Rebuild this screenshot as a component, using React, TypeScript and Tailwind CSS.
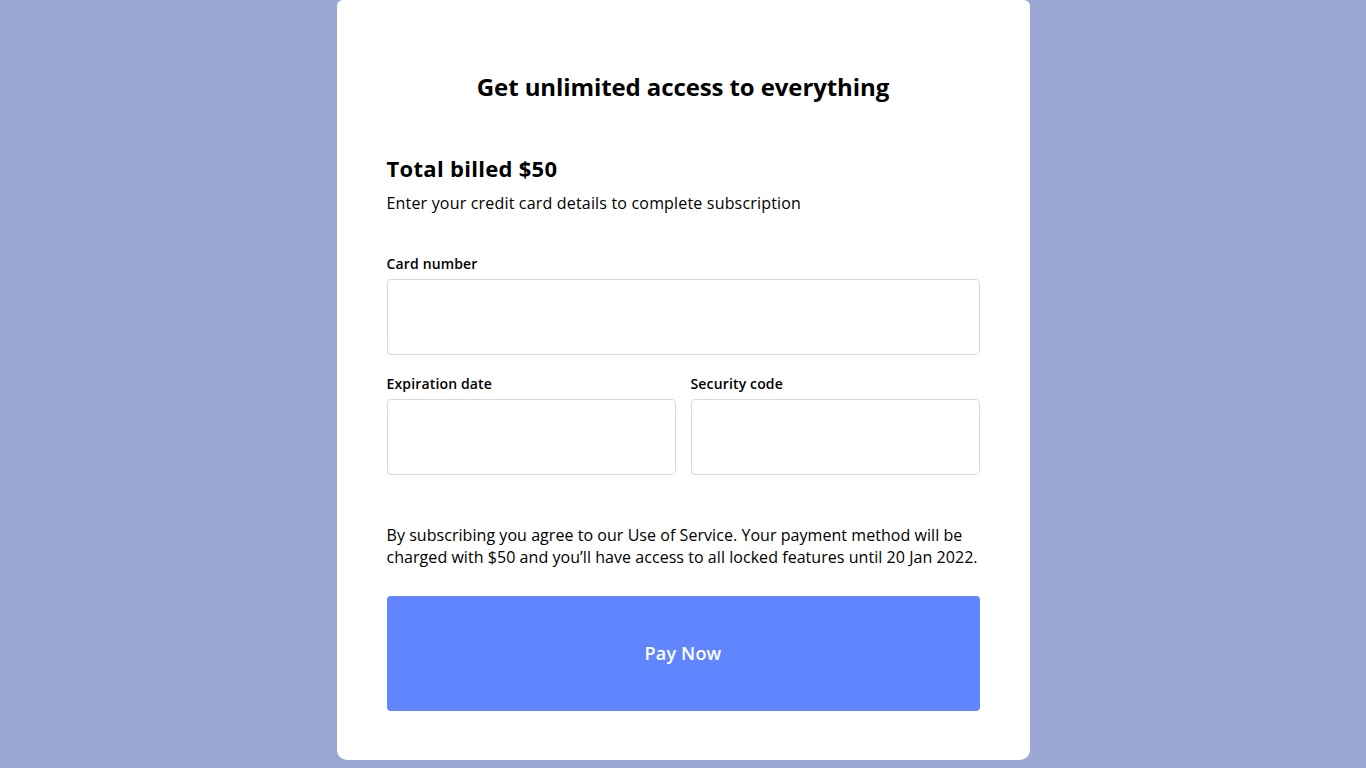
export default function App() {
  return (
    <div className="min-h-screen w-full bg-[#9ba8d3] flex justify-center font-['Open_Sans',sans-serif] text-black">
      <div className="w-[693px] h-[760px] bg-white rounded-b-[10px] rounded-t-[6px] px-[50px] pt-[71px]">
        <h1 className="text-center text-[24px] leading-[32px] font-bold tracking-[-0.1px]">Get unlimited access to everything</h1>

        <h2 className="mt-[50px] text-[22px] leading-[30px] font-bold tracking-[0.3px]">Total billed $50</h2>
        <p className="mt-[8px] text-[16px] leading-[24px] tracking-[0.18px]">Enter your credit card details to complete subscription</p>

        <label className="block mt-[39px] text-[14px] leading-[20px] font-semibold tracking-[0.15px]">Card number</label>
        <input
          type="text"
          className="block mt-[5px] w-full h-[76px] rounded-[4px] border border-[#d3dae6] px-4 outline-none"
        />

        <div className="grid grid-cols-2 gap-[15px] mt-[19px]">
          <div>
            <label className="block text-[14px] leading-[20px] font-semibold tracking-[0.15px]">Expiration date</label>
            <input
              type="text"
              className="block mt-[5px] w-full h-[76px] rounded-[4px] border border-[#d3dae6] px-4 outline-none"
            />
          </div>
          <div>
            <label className="block text-[14px] leading-[20px] font-semibold tracking-[0.15px]">Security code</label>
            <input
              type="text"
              className="block mt-[5px] w-full h-[76px] rounded-[4px] border border-[#d3dae6] px-4 outline-none"
            />
          </div>
        </div>

        <p className="mt-[49px] text-[16px] leading-[22px] tracking-[0.05px]">
          By subscribing you agree to our Use of Service. Your payment method will be charged with $50 and you’ll have access to all locked features until 20 Jan 2022.
        </p>

        <button className="mt-[28px] w-full h-[115px] rounded-[4px] bg-[#6185fe] text-white text-[18px] font-semibold tracking-[0.2px]">
          Pay Now
        </button>
      </div>
    </div>
  );
}
